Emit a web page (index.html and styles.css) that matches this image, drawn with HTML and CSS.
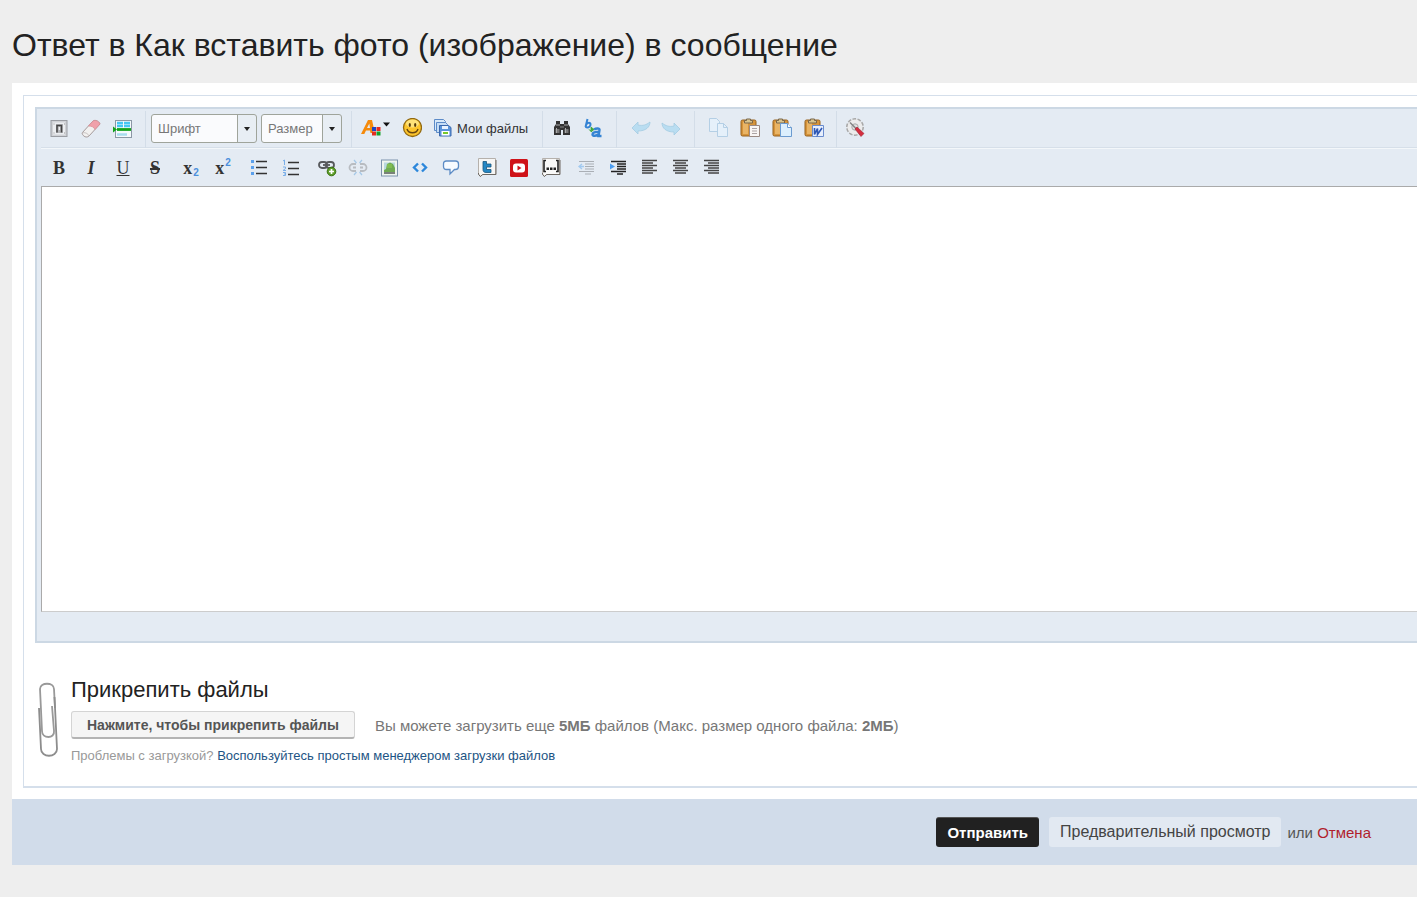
FILE: index.html
```html
<!DOCTYPE html>
<html lang="ru">
<head>
<meta charset="utf-8">
<title>Ответ в теме</title>
<link rel="stylesheet" href="styles.css">
</head>
<body>
<h1 class="page-title">Ответ в Как вставить фото (изображение) в сообщение</h1>
<form class="reply">
  <div class="reply-body">
    <div class="reply-frame">
      <div class="editor">
        <div class="toolbar toolbar-top">
          <div class="group g-source">
            <button type="button" class="tool" aria-label="Режим"><svg viewBox="0 0 20 20"><rect x="2" y="1.500" width="16" height="16" fill="#d0d2d6" stroke="#9a9da3"/><rect x="4" y="3.500" width="12" height="12" fill="#eceef1"/><rect x="7" y="5" width="7" height="9" fill="#b4b6ba"/><path d="M8 13.500V6.500h4.500v7" fill="none" stroke="#444" stroke-width="1.500"/><path d="M10.300 8v3" stroke="#fff"/><path d="M4.500 5h1M4.500 14h1M15 5h1M15 14h1" stroke="#999"/></svg></button>
            <button type="button" class="tool" aria-label="Убрать форматирование"><svg viewBox="0 0 20 20"><path d="M1 14 12 2c2-1.500 6 0 7 3L8 17c-2 2-6 1-7-3z" fill="#f2f1f0" stroke="#a49a9a"/><path d="M7.500 7 12 2c2-1.500 6 0 7 3l-5 5.500c-1-2.500-3.500-3.500-6.500-3.500z" fill="#f0a0aa" stroke="#d98b94" stroke-width=".7"/><path d="M1 14c3-1 6 .5 7 3" fill="none" stroke="#c6bfbf"/></svg></button>
            <button type="button" class="tool" aria-label="Разрыв"><svg viewBox="0 0 20 20"><rect x="2.500" y="1.500" width="16" height="17" fill="#f4f9fc" stroke="#8b98a5"/><path d="M4 4h13M4 7h13" stroke="#45c7f4" stroke-width="2.400" stroke-dasharray="6 1"/><path d="M4 15.500h10" stroke="#a7dcef" stroke-width="2.500"/><path d="M4 10.500h14" stroke="#12a31c" stroke-width="2.800"/><path d="M0 7.500v6l4-3z" fill="#12a31c"/></svg></button>
          </div>
          <div class="group g-combo">
            <span class="combo combo-font"><select aria-label="Шрифт"><option>Шрифт</option></select><svg class="combo-arrow" viewBox="0 0 8 5"><path d="M1 0h6L4 4z" fill="#222"/></svg></span>
            <span class="combo combo-size"><select aria-label="Размер"><option>Размер</option></select><svg class="combo-arrow" viewBox="0 0 8 5"><path d="M1 0h6L4 4z" fill="#222"/></svg></span>
          </div>
          <div class="group g-insert">
            <button type="button" class="tool tool-wide" aria-label="Цвет текста"><svg viewBox="0 0 30 20"><path d="M0 16 7 2h4l2 9-2 4H9.500L9 12.500H5L3.300 16zM6 10h3L8.300 5.500z" fill="#f58a0b"/><path d="M11 9h4v4h-4z" fill="#1b46c5"/><path d="M15.500 9h4v4h-4z" fill="#e52b20"/><path d="M11 13.500h4v4h-4z" fill="#e52b20"/><path d="M15.500 13.500h4v4h-4z" fill="#18a02a"/><path d="M22 4.500h7l-3.500 4z" fill="#111"/></svg></button>
            <button type="button" class="tool" aria-label="Смайлы"><svg viewBox="0 0 20 20"><circle cx="10.500" cy="9.500" r="9" fill="#fcc42c" stroke="#92690f" stroke-width="1.300"/><ellipse cx="10.500" cy="5.500" rx="6.500" ry="4" fill="#fee27a"/><ellipse cx="7.800" cy="7" rx="1.100" ry="2" fill="#54390b"/><ellipse cx="13.200" cy="7" rx="1.100" ry="2" fill="#54390b"/><path d="M5 11c1.500 5 9.500 5 11 0" fill="none" stroke="#684611" stroke-width="1.500"/></svg></button>
            <button type="button" class="tool tool-text"><svg viewBox="0 0 20 20"><path d="M1.500 1.500h9l2 2v9h-11z" fill="#d8e9f8" stroke="#5c8bc8"/><path d="M3.500 4.500h9l2 2v8h-11z" fill="#c5ddf5" stroke="#5c8bc8"/><path d="M6.500 7.500h9l2.500 2v8.500H6.500z" fill="#5a94da" stroke="#3b69ad"/><path d="M9 8h6v3H9z" fill="#e8f3ff"/><path d="M8.500 13h8v4.500h-8z" fill="#fff"/><path d="M10 15h5" stroke="#79c829" stroke-width="2"/></svg><span>Мои файлы</span></button>
          </div>
          <div class="group g-find">
            <button type="button" class="tool" aria-label="Найти"><svg viewBox="0 0 20 20"><path d="M4 3h4v3h4V3h4v3l2 3v8h-7v-5H9v5H2V9l2-3z" fill="#333"/><path d="M3.500 11h4v4h-4zM12.500 11h4v4h-4z" fill="#777"/><path d="M4 7h4M12 7h4M4.500 10v5M13.500 10v5" stroke="#aaa"/><path d="M8 9h4" stroke="#888"/></svg></button>
            <button type="button" class="tool" aria-label="Заменить"><svg viewBox="0 0 20 20"><g fill="none" stroke="#3584d4" stroke-width="2"><path d="M4.500 1 2.500 9M3.500 6.500c1-2.500 4-2.500 4 0C7.500 8 6 9.500 4.500 9.500S2.500 9 3 7.500"/><path d="M11 11.500c2-1.500 6-1.500 5.500.5L15.500 18h3M16 14c-4-.5-6.500.5-6.500 2.500s4.500 1.500 6-.5" stroke-width="2.400"/></g><path d="M6 11.500c1 1.500 2 1.500 3.500 1M8 9l3 2.500-3 2.500z" fill="#3fa83a" stroke="#3fa83a" stroke-width=".8"/></svg></button>
          </div>
          <div class="group g-history">
            <button type="button" class="tool" aria-label="Отменить"><svg viewBox="0 0 20 20"><path d="M1 10 7 4v3c5 1 8 0 12-3 0 5-4 9-12 9v3z" fill="#b9ddf1" stroke="#a3cbe2" stroke-width=".8"/></svg></button>
            <button type="button" class="tool" aria-label="Повторить"><svg viewBox="0 0 20 20"><path d="M19 11 13 5v3c-5 1-8 0-12-3 0 5 4 9 12 9v3z" fill="#b9ddf1" stroke="#a3cbe2" stroke-width=".8"/></svg></button>
          </div>
          <div class="group g-paste">
            <button type="button" class="tool" aria-label="Копировать"><svg viewBox="0 0 20 20"><g fill="#e5f0fa" stroke="#b4cfe5"><path d="M1.500 .5h7l3 3v10h-10z"/><path d="M9.500 5.500h6l4 4v9h-10z"/><path d="M15.500 5.500v4h4" fill="none"/></g></svg></button>
            <button type="button" class="tool" aria-label="Вставить"><svg viewBox="0 0 20 20"><rect x="1" y="2" width="15" height="16" rx="1.500" fill="#d6943b" stroke="#96601c"/><path d="M3 4h5v12H3z" fill="#e9b465"/><path d="M4.500 5V2.500h2V1h4v1.500h2V5z" fill="#d9c48e" stroke="#79664b"/><path d="M9.500 7.500h10v11h-10z" fill="#f8f5f4" stroke="#9a8983"/><path d="M12 10.500h5M12 13h5M12 15.500h5" stroke="#aba3a4"/></svg></button>
            <button type="button" class="tool" aria-label="Вставить текст"><svg viewBox="0 0 20 20"><rect x="1" y="2" width="15" height="16" rx="1.500" fill="#d6943b" stroke="#96601c"/><path d="M3 4h5v12H3z" fill="#e9b465"/><path d="M4.500 5V2.500h2V1h4v1.500h2V5z" fill="#d9c48e" stroke="#79664b"/><path d="M8.500 5.500h7l4 4v9h-11z" fill="#dceffd" stroke="#6b9bd0"/><path d="M15.500 5.500v4h4" fill="#fff" stroke="#6b9bd0"/></svg></button>
            <button type="button" class="tool" aria-label="Вставить из Word"><svg viewBox="0 0 20 20"><rect x="1" y="2" width="15" height="16" rx="1.500" fill="#d6943b" stroke="#96601c"/><path d="M3 4h5v12H3z" fill="#e9b465"/><path d="M4.500 5V2.500h2V1h4v1.500h2V5z" fill="#d9c48e" stroke="#79664b"/><path d="M8.500 7.500h11v11h-11z" fill="#e7effd" stroke="#6a8cce"/><path d="M10.500 10v6.500l3-6v6l4.500-6.500" fill="none" stroke="#2f58b5" stroke-width="1.600"/></svg></button>
          </div>
          <div class="group g-options">
            <button type="button" class="tool" aria-label="Настройки"><svg viewBox="0 0 20 20"><circle cx="10" cy="9" r="8" fill="#e2e2e2" stroke="#a9a9a9" stroke-width="2" stroke-dasharray="3.500 1.500"/><circle cx="10" cy="9" r="7.500" fill="#ececec"/><circle cx="10" cy="9" r="3.200" fill="#e0e0e0" stroke="#aaa"/><path d="M5 4.500l7 7" stroke="#858585" stroke-width="1.500"/><path d="m10 11 2-2 7 6.500-3 3z" fill="#d42d3e" stroke="#9e2130" stroke-width=".6"/></svg></button>
          </div>
        </div>
        <div class="toolbar toolbar-bottom">
          <div class="group">
            <button type="button" class="tool letter"><b>B</b></button>
            <button type="button" class="tool letter"><i>I</i></button>
            <button type="button" class="tool letter"><u>U</u></button>
            <button type="button" class="tool letter letter-strike"><s>S</s></button>
          </div>
          <div class="group">
            <button type="button" class="tool letter script"><b>x</b><sub>2</sub></button>
            <button type="button" class="tool letter script"><b>x</b><sup>2</sup></button>
          </div>
          <div class="group">
            <button type="button" class="tool" aria-label="Маркированный список"><svg viewBox="0 0 20 20"><path d="M7 3.500h11M7 9.500h11M7 15.500h11" stroke="#333" stroke-width="1.300"/><path d="M2 2h3v3H2zM2 8h3v3H2zM2 14h3v3H2z" fill="#5ba0ec"/></svg></button>
            <button type="button" class="tool" aria-label="Нумерованный список"><svg viewBox="0 0 20 20"><path d="M7 4.500h11M7 10.500h11M7 16.500h11" stroke="#333" stroke-width="1.300"/><path d="M2 3l1.500-1v5M2 9h2.500v1.500L2 12.500h3M2 14.500h2.500v3H2M3 16h1.500" fill="none" stroke="#79aee9"/></svg></button>
          </div>
          <div class="group group-tight">
            <button type="button" class="tool" aria-label="Ссылка"><svg viewBox="0 0 20 20"><g fill="none" stroke="#57595c" stroke-width="1.800"><rect x="2" y="4" width="8" height="6" rx="3"/><rect x="9" y="4" width="8" height="6" rx="3"/><path d="M6 7h7"/></g><circle cx="14.500" cy="13.500" r="4.300" fill="#5e9e2a" stroke="#397111"/><path d="M14.500 11v5M12 13.500h5" stroke="#fff" stroke-width="1.700"/></svg></button>
            <button type="button" class="tool" aria-label="Убрать ссылку"><svg viewBox="0 0 20 20"><g fill="none" stroke="#b8bcc1" stroke-width="1.800"><path d="M8 6H5a3.500 3.500 0 0 0 0 7h3M12 6h3a3.500 3.500 0 0 1 0 7h-3M5 9.500h3M12 9.500h3"/></g><path d="M6 2l2.500 3M14 2l-2.500 3M6 17l2.500-3M14 17l-2.500-3" stroke="#a5c8e7" stroke-width="1.200"/></svg></button>
            <button type="button" class="tool" aria-label="Изображение"><svg viewBox="0 0 20 20"><rect x="2.500" y="2" width="16" height="16" fill="#eff5ef" stroke="#7d94ad"/><path d="M5 4.500h11v11H5z" fill="#b9d9de"/><path d="M5 15v-3l2-1 1-5 3-1.500L14 6l2 4v5z" fill="#6faa52"/><path d="M8 6h5v4H8z" fill="#80bd50"/><path d="M5 14h11v2H5z" fill="#79817a"/></svg></button>
            <button type="button" class="tool" aria-label="Код"><svg viewBox="0 0 20 20"><path d="M8 5.500 4 9.500l4 4M12 5.500l4 4-4 4" fill="none" stroke="#2c87db" stroke-width="2.400"/></svg></button>
            <button type="button" class="tool" aria-label="Цитата"><svg viewBox="0 0 20 20"><path d="M5.500 3h9c2 0 3 1 3 3v2.500c0 2-1 3-3 3h-1L9 16v-4.500H5.500c-2 0-3-1-3-3V6c0-2 1-3 3-3z" fill="#f7fbff" stroke="#5d8cc5" stroke-width="1.300"/></svg></button>
          </div>
          <div class="group">
            <button type="button" class="tool" aria-label="Twitter"><svg viewBox="0 0 20 20"><path d="M1.500 .500h17v16H6l-3 2-1.500-3z" fill="#f6f6f5" stroke="#b5b1ac"/><path d="M1.500 15v1.500l2 2 2-2H19V2" fill="none" stroke="#6e6963"/><path d="M6 3.500h3.500V6H14v3H9.500v2.500H14v3H9c-2 0-3-1-3-3z" fill="#2587c4" stroke="#18577f" stroke-width=".8"/></svg></button>
            <button type="button" class="tool" aria-label="YouTube"><svg viewBox="0 0 20 20"><rect x="1" y="1" width="18" height="18" rx="1.500" fill="#cf1218"/><rect x="4" y="5.500" width="12" height="9" rx="3" fill="#fff"/><path d="m8.500 7.500 4 2.500-4 2.500z" fill="#cf1218"/></svg></button>
            <button type="button" class="tool" aria-label="Спойлер"><svg viewBox="0 0 20 20"><path d="M1.500 .500h17v16H6l-3 2-1.500-3z" fill="#f9f9f8" stroke="#b5b1ac"/><path d="M1.500 15v1.500l2 2 2-2H19V2" fill="none" stroke="#6e6963"/><path d="M5 2.500H3v11h2M15 2.500h2v11h-2" fill="none" stroke="#222" stroke-width="1.600"/><path d="M5.500 9.500H8V12H5.500zM9 9.500h2.500V12H9zM12.500 9.500H15V12h-2.500z" fill="#222"/></svg></button>
          </div>
          <div class="group group-tight">
            <button type="button" class="tool" aria-label="Уменьшить отступ"><svg viewBox="0 0 20 20"><path d="M2 3.500h15M8 6h9M8 8.500h9M8 11h9M2 13.500h15M8 16h6" stroke="#aaafb5"/><path d="M7 8.500H3M5 6l-3 2.500L5 11" fill="none" stroke="#a2caf0" stroke-width="1.300"/></svg></button>
            <button type="button" class="tool" aria-label="Увеличить отступ"><svg viewBox="0 0 20 20"><path d="M3 3.500h15M9 6h9M9 8.500h9M9 11h9M3 13.500h15M9 16h6" stroke="#222" stroke-width="1.500"/><path d="M2 5.500v6l5-3z" fill="#4c9df0"/></svg></button>
            <button type="button" class="tool" aria-label="По левому краю"><svg viewBox="0 0 20 20"><path d="M3 2.500h15M3 5h11M3 7.500h15M3 10h11M3 12.500h15M3 15h11" stroke="#444" stroke-width="1.500"/></svg></button>
            <button type="button" class="tool" aria-label="По центру"><svg viewBox="0 0 20 20"><path d="M3 2.500h15M5 5h11M3 7.500h15M5 10h11M3 12.500h15M5 15h11" stroke="#444" stroke-width="1.500"/></svg></button>
            <button type="button" class="tool" aria-label="По правому краю"><svg viewBox="0 0 20 20"><path d="M3 2.500h15M7 5h11M3 7.500h15M7 10h11M3 12.500h15M7 15h11" stroke="#444" stroke-width="1.500"/></svg></button>
          </div>
        </div>
        <textarea class="message" aria-label="Сообщение"></textarea>
      </div>
      <section class="attach">
        <svg class="clip" viewBox="0 0 24 76" fill="none" stroke-width="1.800"><path d="M18 26 17 7c0-7-14-7-14 0l2 42c0 8 13 8 12 0l-2-25" stroke="#999"/><path d="M17.500 15 20 67c0 9-16 9-16 0L2 26" stroke="#8d8d8d"/></svg>
        <div class="attach-main">
          <h2 class="attach-title">Прикрепить файлы</h2>
          <div class="attach-row">
            <button type="button" class="attach-button">Нажмите, чтобы прикрепить файлы</button>
            <p class="attach-limit">Вы можете загрузить еще <b>5МБ</b> файлов (Макс. размер одного файла: <b>2МБ</b>)</p>
          </div>
          <p class="attach-help">Проблемы с загрузкой? <a href="#">Воспользуйтесь простым менеджером загрузки файлов</a></p>
        </div>
      </section>
    </div>
  </div>
  <div class="actions">
    <button type="submit" class="submit">Отправить</button>
    <button type="button" class="preview">Предварительный просмотр</button>
    <span class="or">или <a href="#" class="cancel">Отмена</a></span>
  </div>
</form>
</body>
</html>
```
FILE: styles.css
```css
* { box-sizing: border-box; }
body {
  margin: 0;
  padding-left: 12px;
  background: #eee;
  color: #222;
  font-family: "Liberation Sans", Arial, sans-serif;
  font-size: 14px;
}
h1, h2, p { margin: 0; font-weight: 400; }
button { font-family: inherit; cursor: pointer; }
a { text-decoration: none; }

.page-title {
  padding: 25px 0 18px;
  font-size: 32px;
  line-height: 40px;
}
.reply-body { padding: 12px 0 11px 11px; background: #fff; }
.reply-frame {
  padding: 11px 0 22px 11px;
  border: 1px solid #d5dfeb;
  border-right: 0;
  border-bottom-width: 2px;
}
.editor {
  padding: 0 0 29px 4px;
  border: 2px solid #ccd8e4;
  border-right: 0;
  background: #e4ebf3;
}
.toolbar { display: flex; height: 37px; }
.toolbar-top { height: 40px; border-bottom: 1px solid #f3f7fa; box-shadow: inset 0 -1px #d6dfe9; }
.group { display: flex; align-items: center; gap: 12px; }
.toolbar-top .group { padding-bottom: 2px; }
.toolbar-top .group + .group { border-left: 1px solid #d3dde8; margin-top: 2px; padding-bottom: 3px; }
.toolbar-top .g-source { padding: 0 12px 0 8px; }
.toolbar-top .g-combo { gap: 4px; padding: 0 9px 0 5px; }
.toolbar-top .g-insert { gap: 11px; padding: 0 14px 0 9px; }
.toolbar-top .g-find { gap: 11px; padding: 0 13px 0 9px; }
.toolbar-top .g-history { gap: 10px; padding: 0 13px 0 14px; }
.toolbar-top .g-paste { padding: 0 12px 0 13px; }
.toolbar-top .g-options { padding: 0 0 0 8px; }
.toolbar-bottom { gap: 16px; padding-left: 8px; }
.group-tight { gap: 11px; }

.tool {
  display: flex;
  align-items: center;
  justify-content: center;
  width: 20px;
  height: 20px;
  padding: 0;
  border: 0;
  background: none;
  color: #333;
}
.tool svg { flex: none; width: 20px; height: 20px; }
.tool-wide { width: 30px; }
.tool-wide svg { width: 30px; }
.tool-text { width: auto; gap: 4px; font-size: 13px; }
.letter { font-family: "Liberation Serif", "Times New Roman", serif; font-size: 18px; line-height: 20px; }
.letter i { font-weight: 700; }
.letter-strike { font-weight: 700; }
.letter-strike s { text-decoration-thickness: 2px; }
.script { gap: 1px; }
.letter sub, .letter sup {
  color: #4a8fdc;
  font-family: "Liberation Sans", Arial, sans-serif;
  font-size: 10px;
  font-weight: 700;
  line-height: 10px;
}
.letter sub { align-self: flex-end; }
.letter sup { align-self: flex-start; }

.combo {
  position: relative;
  display: flex;
  height: 29px;
  border: 1px solid #9fa49b;
  border-radius: 3px;
  background: linear-gradient(90deg, #fafbfd, #fafbfd) no-repeat 0 0 / calc(100% - 19px) 100%, #e8eef4;
}
.combo-font { width: 106px; }
.combo-size { width: 81px; }
.combo::after {
  content: "";
  position: absolute;
  top: 0;
  right: 18px;
  bottom: 0;
  border-left: 1px solid #9fa49b;
}
.combo select {
  width: 100%;
  padding: 0 20px 0 6px;
  border: 0;
  background: none;
  color: #777;
  font-family: inherit;
  font-size: 13px;
  appearance: none;
}
.combo-arrow { position: absolute; top: 12px; right: 5px; width: 8px; height: 5px; }

.message {
  display: block;
  width: 100%;
  height: 426px;
  padding: 8px;
  border: 1px solid #aaa;
  border-right: 0;
  border-bottom-color: #ccc;
  outline: 0;
  background: #fff;
  font: inherit;
  resize: none;
}

.attach { display: flex; gap: 10px; padding: 34px 0 0 2px; }
.clip { flex: none; width: 24px; height: 76px; margin-top: 5px; }
.attach-title { font-size: 22px; line-height: 26px; }
.attach-row { display: flex; align-items: center; gap: 20px; margin-top: 8px; }
.attach-button {
  height: 28px;
  padding: 0 15px;
  border: 1px solid #d4d4d4;
  border-bottom: 2px solid #b4b4b4;
  border-radius: 3px;
  background: #f5f5f5;
  color: #555;
  font-size: 14px;
  font-weight: 700;
}
.attach-limit { color: #777; font-size: 15px; }
.attach-help { margin-top: 9px; color: #999; font-size: 13px; line-height: 16px; }
.attach-help a { color: #1d5484; }

.actions {
  display: flex;
  align-items: center;
  justify-content: flex-end;
  padding: 18px 46px 18px 0;
  background: #d1dcea;
  color: #555;
  font-size: 15px;
}
.submit, .preview { height: 30px; padding: 0 11px; border: 0; border-radius: 3px; }
.submit { margin-right: 10px; border-top: 1px solid #555; background: #212121; color: #fff; font-size: 15px; font-weight: 700; }
.preview { margin-right: 6px; background: #e2e9f2; color: #444; font-size: 16px; }
.cancel { color: #b01e2d; }
```
